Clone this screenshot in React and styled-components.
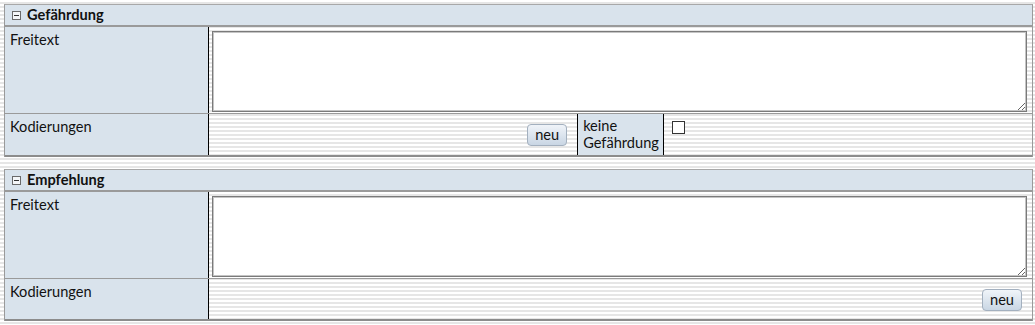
import styled, { createGlobalStyle } from 'styled-components';

const Global = createGlobalStyle`
    html, body {
        margin: 0;
        height: 100%;
    }
    body {
        padding: 4px 2px 0 4px;
        box-sizing: border-box;
        font-family: Lato, "Open Sans", "Liberation Sans", sans-serif;
        font-size: 14.6px;
        color: #111;
        background: repeating-linear-gradient(#ffffff 0 2px, #e6e6e6 2px 4px);
    }
`

const Section = styled.div`
    border-top: 1px solid #a8a8a8;
    border-left: 1px solid #9a9a9a;
    border-right: 1px solid #9a9a9a;
    margin-bottom: 12px;
`

const Header = styled.div`
    height: 20px;
    display: flex;
    align-items: center;
    gap: 6px;
    padding-left: 7px;
    background: #d9e3ec;
    border-bottom: 2px solid #9a9a9a;
    font-weight: bold;
    line-height: 20px;
`

const Toggle = styled.span`
    width: 9px;
    height: 9px;
    box-sizing: border-box;
    border: 1px solid #6a6a6a;
    background: #f4f6f8;
    position: relative;
    &::after{
        content: '';
        position: absolute;
        left: 1px;
        right: 1px;
        top: 3px;
        height: 1px;
        background: #333;
    }
`

const Row = styled.div`
    display: grid;
    grid-template-columns: 204px 1fr ${p => p.split ? 'auto 1fr' : ''};
    border-bottom: ${p => p.last ? '2px solid #8c8c8c' : '1px solid #9a9a9a'};
    min-height: ${p => p.h}px;
`

const Label = styled.div`
    background: #d9e3ec;
    padding: 4px 5px;
    line-height: 18px;
    border-right: 1px solid #000;
    ${p => p.inner && `
        border-left: 1px solid #000;
        padding: 3px 4px 2px 5px;
        line-height: 17px;
    `}
`

const Cell = styled.div`
    padding: ${p => p.pad || '0'};
    display: flex;
    justify-content: ${p => p.end ? 'flex-end' : 'flex-start'};
    align-items: flex-start;
`

const Area = styled.textarea`
    width: 100%;
    height: 81px;
    box-sizing: border-box;
    border: 1px solid #7a7a7a;
    box-shadow: inset 0 0 0 1px #c4c4c4;
    background: #fff;
    margin: 0;
    font: inherit;
    resize: both;
`

const Button = styled.button`
    height: 22px;
    width: 40px;
    padding: 0;
    font-family: inherit;
    font-size: 14.6px;
    color: #111;
    border: 1px solid #a3b0bf;
    border-radius: 4px;
    background: linear-gradient(#f0f4f9, #c9d6e4);
    line-height: 18px;
`

const Check = styled.input`
    appearance: none;
    width: 13px;
    height: 13px;
    margin: 0;
    border: 1px solid #333;
    background: #fff;
    box-sizing: border-box;
`

function Block({ title, extra }) {
    return (
        <Section>
            <Header><Toggle />{title}</Header>
            <Row h={86}>
                <Label>Freitext</Label>
                <Cell pad='4px 5px 1px 3px'><Area /></Cell>
            </Row>
            <Row last split={extra} h={extra ? 41 : 40}>
                <Label>Kodierungen</Label>
                <Cell pad='10px 10px 0 0' end><Button>neu</Button></Cell>
                {extra && <Label inner>keine<br />Gefährdung</Label>}
                {extra && <Cell pad='7px 8px'><Check type='checkbox' /></Cell>}
            </Row>
        </Section>
    )
}

export default function App() {
    return (
        <>
            <Global />
            <Block title='Gefährdung' extra />
            <Block title='Empfehlung' />
        </>
    )
}
